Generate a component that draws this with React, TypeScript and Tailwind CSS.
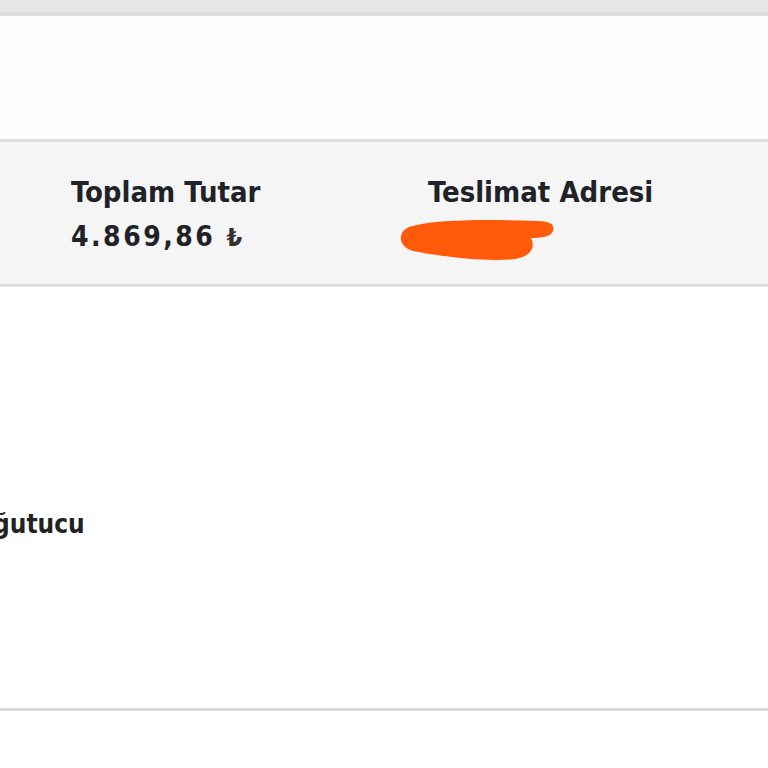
import type { ReactNode } from "react";

const Summary = ({ label, children }: { label: string; children: ReactNode }) => (
  <div className="flex flex-col">
    <span className="text-[29px] font-bold leading-[36px] text-[#1f2328]">{label}</span>
    {children}
  </div>
);

export default function App() {
  return (
    <div className="w-[768px] h-[768px] overflow-hidden bg-white font-['DejaVu_Sans_Condensed','DejaVu_Sans',sans-serif]">
      <div className="h-[16px] bg-[#e6e6e6] border-b-[4px] border-[#dcdcdc]" />
      <div className="h-[123px] bg-[#fefefe]" />
      <div className="h-[148px] bg-[#f5f5f5] border-y-[3px] border-[#dedede] flex pt-[32px]">
        <div className="pl-[71px] w-[428px]">
          <Summary label="Toplam Tutar">
            <span className="mt-[12px] text-[28px] font-bold leading-[30px] text-[#1f2328] tracking-[2.5px]">
              4.869,86 <span className="text-[25px] font-bold text-[#333]">₺</span>
            </span>
          </Summary>
        </div>
        <div>
          <Summary label="Teslimat Adresi">
            <svg width="160" height="50" viewBox="0 0 160 50" className="-ml-[31px] mt-[2px]">
              <path
                d="M10 16 C30 8 80 7 140 9 C154 9 158 13 156 19 C154 25 144 26 134 26 C138 34 136 44 118 47 C90 50 46 45 16 39 C2 35 0 22 10 16 Z"
                fill="#ff5a0a"
              />
            </svg>
          </Summary>
        </div>
      </div>
      <div className="h-[424px] bg-white flex flex-col">
        <div className="h-[222px]" />
        <p className="text-[26px] font-bold leading-[30px] text-[#222] -ml-[7px]">ğutucu</p>
        <div className="flex-1" />
        <div className="h-[3px] bg-[#dcdcdc]" />
      </div>
    </div>
  );
}
